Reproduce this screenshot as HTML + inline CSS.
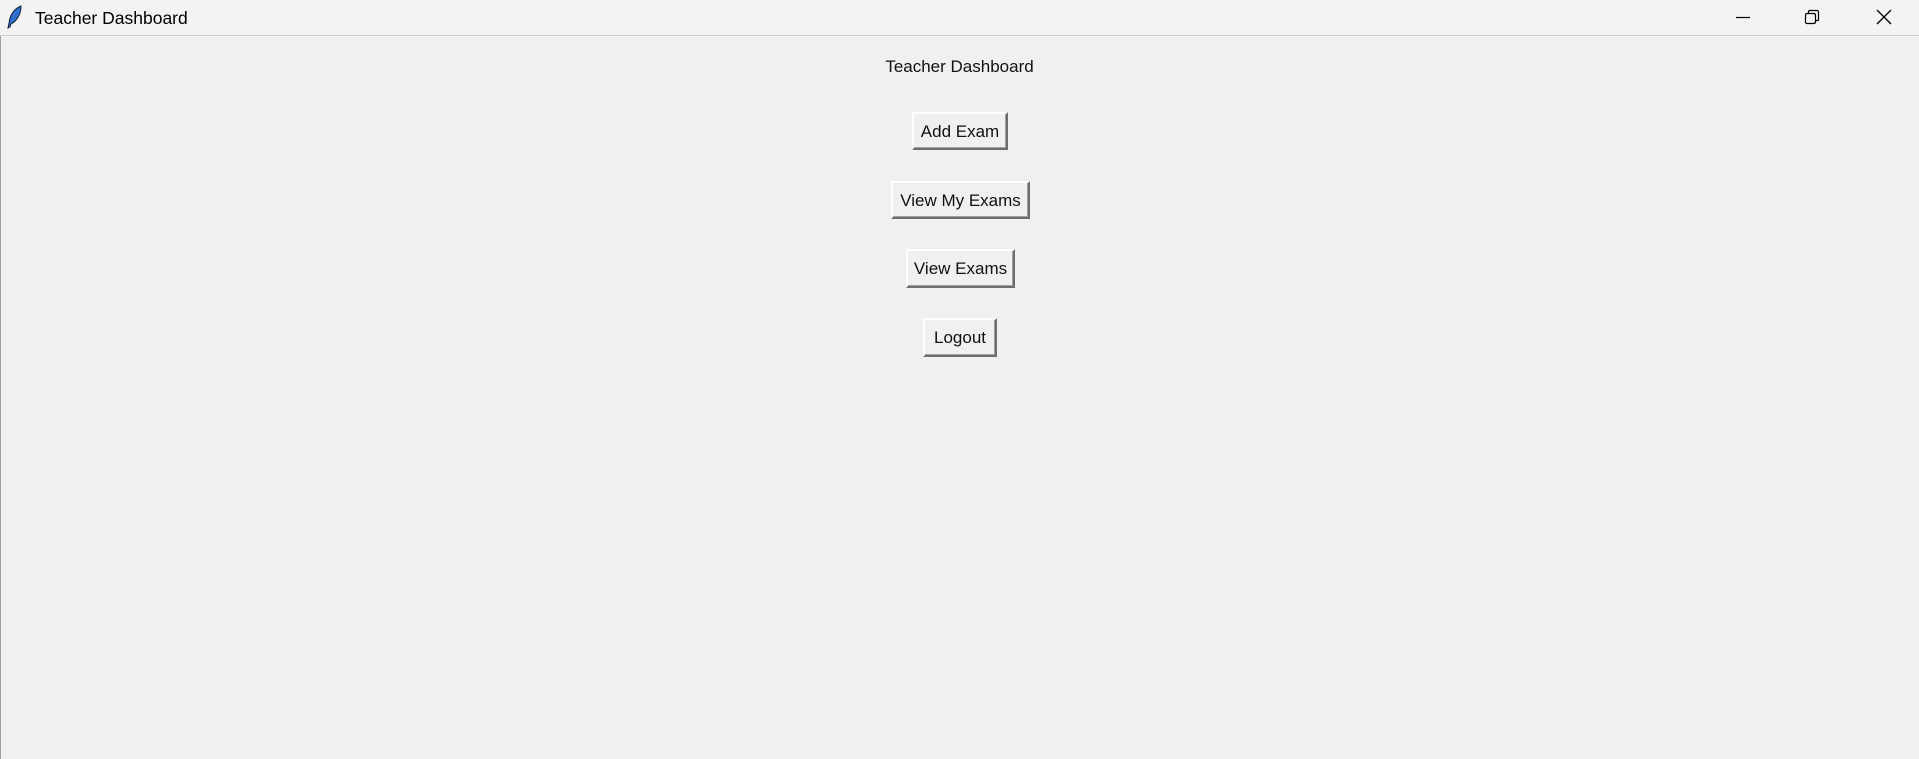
<!DOCTYPE html>
<html><head><style>
html,body{margin:0;padding:0;width:1919px;height:759px;overflow:hidden;background:#f0f0f0;font-family:"Liberation Sans",sans-serif;}
#tb{position:absolute;left:0;top:0;width:1919px;height:35px;background:#f3f3f3;border-bottom:1px solid #d0d0d0;}
#tb .t{position:absolute;left:35px;top:8px;font-size:17.5px;color:#000;}
#main{position:absolute;left:0;top:36px;width:1918px;height:723px;border-left:1px solid #a0a0a0;}
.lbl{position:absolute;top:57px;width:1919px;left:0;text-align:center;font-size:17px;color:#111;}
.b{position:absolute;box-sizing:border-box;background:#f0f0f0;border:2px solid;border-color:#fff #6d6d6d #6d6d6d #fff;box-shadow:inset -1px -1px 0 #a0a0a0;font-size:17px;color:#111;text-align:center;line-height:36px;}
</style></head><body>
<div id="tb">
<svg style="position:absolute;left:6px;top:5px" width="18" height="24" viewBox="0 0 18 24"><path d="M15 1 C8 4 4 10 3 18 L2 23 L4 22 L5 19 C11 16 15 9 15 1Z" fill="#2f6fd0" stroke="#123" stroke-width="1"/></svg>
<div class="t">Teacher Dashboard</div>
<svg style="position:absolute;left:1735px;top:10px" width="16" height="16"><line x1="1" y1="7.5" x2="15" y2="7.5" stroke="#000" stroke-width="1.2"/></svg>
<svg style="position:absolute;left:1804px;top:9px" width="16" height="16"><rect x="1.5" y="4.5" width="10" height="10" rx="1.5" fill="none" stroke="#000" stroke-width="1.2"/><path d="M4.5 4.5 V2.5 a1 1 0 0 1 1-1 H13 a1.5 1.5 0 0 1 1.5 1.5 V10.5 a1 1 0 0 1-1 1 H11.5" fill="none" stroke="#000" stroke-width="1.2"/></svg>
<svg style="position:absolute;left:1876px;top:9px" width="16" height="16"><path d="M1 1 L15 15 M15 1 L1 15" stroke="#000" stroke-width="1.3"/></svg>
</div>
<div id="main"></div>
<div class="lbl">Teacher Dashboard</div>
<div class="b" style="left:912px;top:112px;width:96px;height:38px;">Add Exam</div>
<div class="b" style="left:891px;top:181px;width:139px;height:38px;">View My Exams</div>
<div class="b" style="left:906px;top:249px;width:109px;height:39px;">View Exams</div>
<div class="b" style="left:923px;top:318px;width:74px;height:39px;">Logout</div>
</body></html>
